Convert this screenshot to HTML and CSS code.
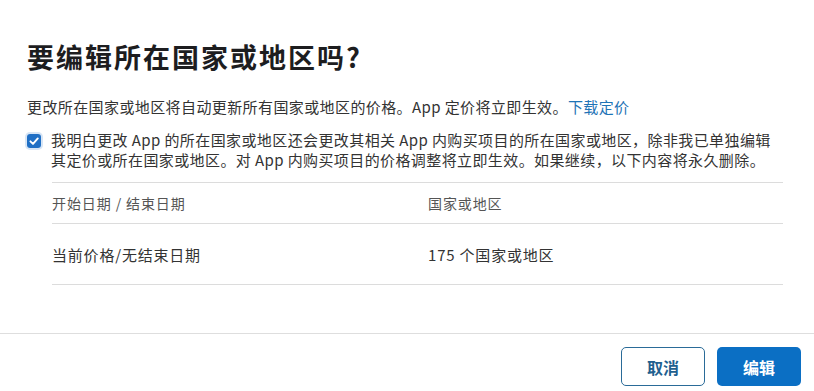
FILE: index.html
```html
<!DOCTYPE html>
<html lang="zh-CN">
<head>
    <meta charset="UTF-8">
    <meta name="viewport" content="width=device-width, initial-scale=1.0">
    <title>要编辑所在国家或地区吗？</title>
    <link rel="stylesheet" href="styles.css">
</head>
<body>
    <div class="dialog">
        <div class="dialog-body">
            <h1 class="title">要编辑所在国家或地区吗?</h1>
            <p class="intro">更改所在国家或地区将自动更新所有国家或地区的价格。App 定价将立即生效。<a href="#" class="link">下载定价</a></p>

            <!-- Confirmation checkbox -->
            <label class="confirm">
                <span class="checkbox">
                    <svg viewBox="0 0 14 14" width="14" height="14">
                        <rect x="0" y="0" width="14" height="14" rx="3" fill="#1f6fc5"/>
                        <path d="M3.4 7.3 L6 9.9 L10.8 4.4" fill="none" stroke="#fff" stroke-width="1.9" stroke-linecap="round" stroke-linejoin="round"/>
                    </svg>
                </span>
                <span class="confirm-text">我明白更改 App 的所在国家或地区还会更改其相关 App 内购买项目的所在国家或地区，除非我已单独编辑其定价或所在国家或地区。对 App 内购买项目的价格调整将立即生效。如果继续，以下内容将永久删除。</span>
            </label>

            <!-- Price table -->
            <div class="price-table">
                <div class="row head">
                    <div class="cell">开始日期 / 结束日期</div>
                    <div class="cell">国家或地区</div>
                </div>
                <div class="row">
                    <div class="cell">当前价格/无结束日期</div>
                    <div class="cell">175 个国家或地区</div>
                </div>
            </div>
        </div>

        <footer class="dialog-footer">
            <button class="btn btn-secondary">取消</button>
            <button class="btn btn-primary">编辑</button>
        </footer>
    </div>
</body>
</html>
```

FILE: styles.css
```css
body {
    font-family: "Noto Sans CJK SC", "Noto Sans", sans-serif;
    margin: 0;
    padding: 0;
    background: #fff;
    color: #333;
}

/* Dialog body */
.dialog-body {
    padding: 0 31px 0 27px;
}

.title {
    margin: 42px 0 0;
    font-size: 27px;
    line-height: 30px;
    letter-spacing: 2px;
    font-weight: 700;
    color: #1d1d1f;
}

.intro {
    margin: 24px 0 0;
    font-size: 15px;
    line-height: 21px;
    letter-spacing: 0.4px;
    color: #333;
}

.link {
    color: #1f74b6;
    text-decoration: none;
}

/* Checkbox row */
.confirm {
    display: flex;
    align-items: flex-start;
    gap: 10px;
    margin-top: 13px;
    font-size: 15px;
    line-height: 20px;
    letter-spacing: 0.4px;
    color: #333;
}

.checkbox {
    display: block;
    width: 14px;
    height: 14px;
    margin-top: 4px;
    flex-shrink: 0;
    box-shadow: 0 0 0 2px rgba(31, 111, 197, 0.18);
    border-radius: 3px;
}

.checkbox svg {
    display: block;
}

/* Table */
.price-table {
    margin: 12px 0 0 25px;
    border-top: 1px solid #dcdcdc;
}

.row {
    display: grid;
    grid-template-columns: 376px 1fr;
    align-items: center;
    height: 60px;
    border-bottom: 1px solid #dcdcdc;
    font-size: 15px;
    letter-spacing: 0.8px;
    color: #333;
}

.row.head {
    height: 40px;
    font-size: 14px;
    letter-spacing: 0.9px;
    color: #555;
}

/* Footer */
.dialog-footer {
    display: flex;
    justify-content: flex-end;
    gap: 12px;
    margin-top: 48px;
    padding: 13px 13px 0;
    border-top: 1px solid #dedede;
}

.btn {
    width: 84px;
    height: 39px;
    border-radius: 5px;
    font-family: inherit;
    font-size: 16px;
    font-weight: 700;
    cursor: pointer;
}

.btn-secondary {
    background: #fff;
    color: #1f5f8f;
    border: 1px solid #2a6b98;
}

.btn-primary {
    background: #0b6fc4;
    color: #fff;
    border: none;
}
```
